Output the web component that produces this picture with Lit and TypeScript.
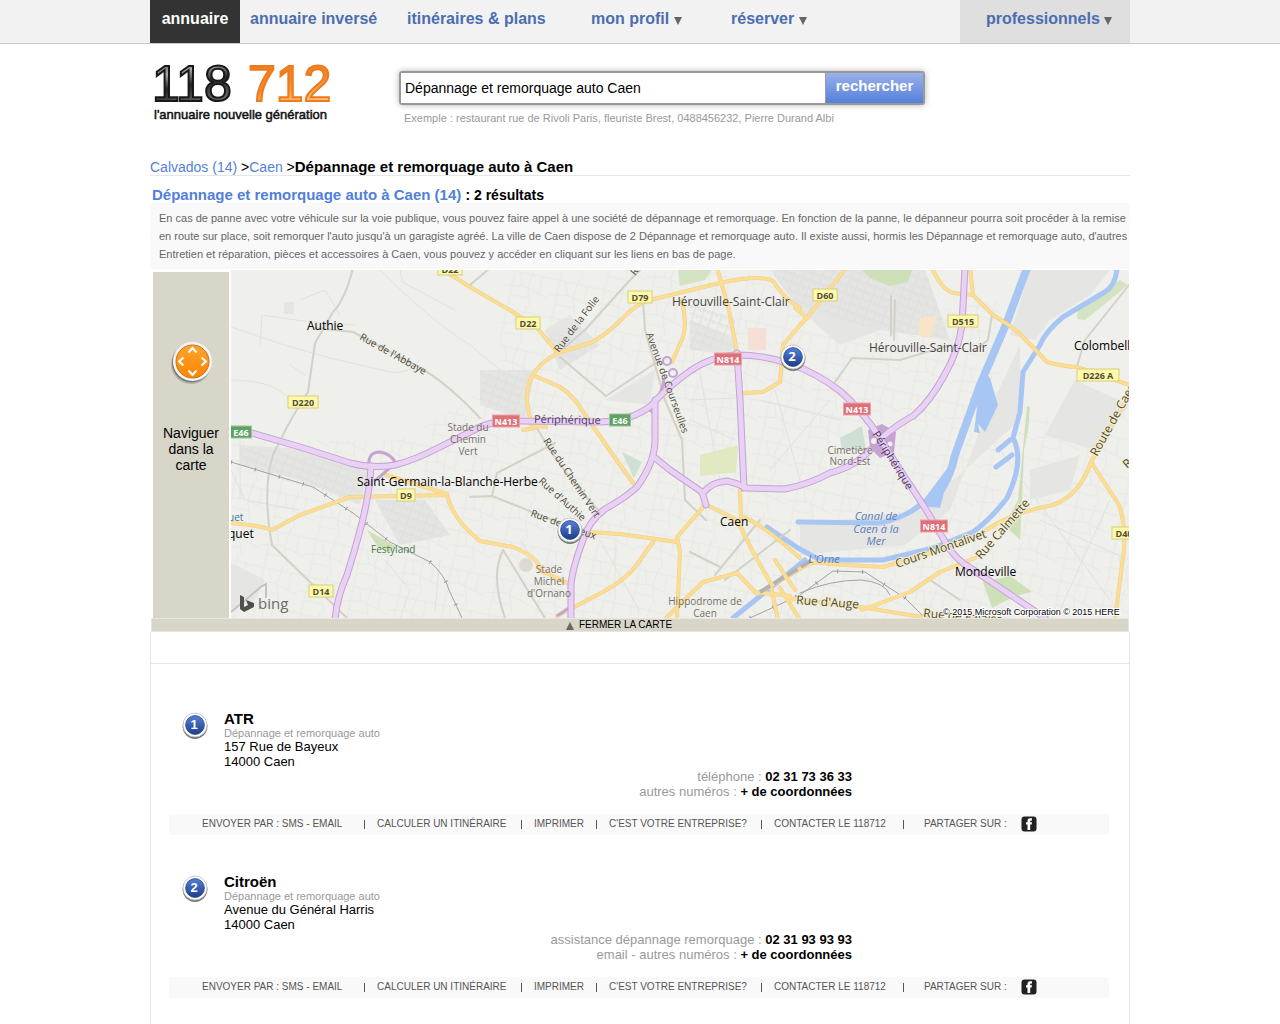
import { LitElement, html, css, svg } from "lit";
import { customElement, property } from "lit/decorators.js";

interface Listing {
  rank: number;
  name: string;
  category: string;
  street: string;
  city: string;
  phoneLabel: string;
  phone: string;
  moreLabel: string;
}

const LISTINGS: Listing[] = [
  {
    rank: 1,
    name: "ATR",
    category: "Dépannage et remorquage auto",
    street: "157 Rue de Bayeux",
    city: "14000 Caen",
    phoneLabel: "téléphone :",
    phone: "02 31 73 36 33",
    moreLabel: "autres numéros :",
  },
  {
    rank: 2,
    name: "Citroën",
    category: "Dépannage et remorquage auto",
    street: "Avenue du Général Harris",
    city: "14000 Caen",
    phoneLabel: "assistance dépannage remorquage :",
    phone: "02 31 93 93 93",
    moreLabel: "email - autres numéros :",
  },
];

/* Blue numbered disc, drawn in a 26 x 28 box. */
const disc = (n: number) => svg`
  <circle cx="13" cy="14.6" r="12.4" fill="#777"></circle>
  <circle cx="13" cy="13" r="12" fill="#fff" stroke="#bbb" stroke-width=".8"></circle>
  <circle cx="13" cy="13" r="9.4" fill="url(#disc)" stroke="#24458f" stroke-width=".8"></circle>
  <text x="12" y="17" text-anchor="middle" font-size="13" font-weight="700" fill="#fff"
    font-family="Liberation Sans, sans-serif">${n}</text>`;

const discGradient = svg`
  <linearGradient id="disc" x1="0" y1="0" x2="0" y2="1">
    <stop offset="0" stop-color="#5580d8"></stop>
    <stop offset="1" stop-color="#1f3d8a"></stop>
  </linearGradient>`;

const MOTORWAYS = [
  "M225 428 L252 433 L300 447 L350 463 Q372 469 395 465 Q415 460 440 447 L480 427 Q495 420 520 421 L600 422 Q632 421 652 405 Q664 390 690 371 Q712 356 737 355 Q765 355 790 364 Q815 372 840 391 Q862 410 880 438 L895 462 L925 508 L947 545 Q956 560 972 569 L1045 618",
  "M655 400 L655 440 Q655 462 637 487 Q625 498 605 509 Q588 522 583 540 Q570 575 571 590 L571 620",
  "M654 457 L670 470 L702 492 L706 505",
  "M704 492 Q712 482 727 481 Q737 483 747 488 L785 489 Q810 484 830 473 Q856 466 870 450",
  "M737 353 L740 400 L744 488",
  "M965 268 L962 325 Q958 352 945 374 Q930 402 913 416 Q895 426 883 437",
  "M371 466 Q370 490 362 523 Q355 550 347 575 Q337 597 335 620",
];

const RAMPS = [
  "M369 465 Q368 452 380 452 Q392 454 396 464 M392 466 L376 480",
  "M645 408 Q656 410 655 424 M652 406 Q664 390 664 378",
  "M557 616 L572 606",
];

const YELLOW_ROADS = [
  "M440 268 L470 287 L513 312 L537 328 L558 353",
  "M800 308 Q785 300 773 281 Q760 274 720 283 L650 300 Q637 303 623 318 Q605 336 590 343 L558 353 Q540 362 533 375 Q526 385 527 402 L531 425 L546 427 M523 430 L535 428",
  "M533 375 L560 387 Q575 397 583 412 L613 455 L633 483",
  "M682 300 Q687 325 683 337 L672 362",
  "M717 268 L729 310 L737 352",
  "M846 268 L807 318 L800 325 L783 345 L780 382 L763 392 L743 393",
  "M795 308 L807 318",
  "M231 523 Q262 526 272 530 L300 515 L350 497 L447 495 Q453 520 480 541 L513 547 Q540 558 540 570 L567 583",
  "M386 475 L447 494",
  "M587 532 L620 534 L677 542",
  "M653 542 L636 566 Q625 580 603 592 L557 616",
  "M705 505 L677 537 L680 552 L677 618",
  "M709 506 L737 520 L753 552 L770 582 L778 620",
  "M666 618 L703 582 L737 573 L755 592 L790 596",
  "M740 490 L741 518 M743 517 Q762 524 800 558",
  "M757 594 L805 566 Q815 560 830 564 L883 567 L933 552 L980 535 Q1005 514 1053 505 Q1080 495 1091 462 L1132 390",
  "M1091 462 L1119 505 Q1126 525 1124 550 L1115 618",
  "M788 598 L867 608 L927 618 M862 610 L910 592 L940 572 L975 558",
  "M932 268 Q942 290 953 293 L973 295 L993 315 Q1010 325 1020 334 L1047 362 Q1060 366 1077 367 L1132 386",
  "M970 268 L973 295",
  "M780 588 L800 620 M775 560 L795 590",
];

const GREY_ROADS = [
  "M353 268 Q345 300 333 312 L315 343 L308 392 Q290 420 283 435 L273 455 Q262 490 272 545 L310 582 L347 618",
  "M315 328 L353 332 L405 360 Q440 375 480 418",
  "M558 353 L585 330 L630 280 L642 268",
  "M643 300 L645 330 L665 400 L682 440 L685 500 L706 520",
  "M560 357 L606 396 L660 360",
  "M537 428 Q560 470 600 512",
  "M470 497 L492 496 L560 523 L585 530",
  "M492 496 L497 473 L555 443",
  "M891 296 L891 335 M895 300 L894 340 M852 358 L900 360 L950 345 M835 382 L852 358",
  "M1129 285 L1085 340 L1077 366",
  "M503 550 Q490 575 505 618 M503 550 L545 618",
  "M715 575 L760 520 M725 580 L790 530 M690 552 L720 567",
  "M930 580 L960 600",
  "M450 268 L490 268 L470 285",
  "M992 315 L988 340 L975 350",
];

const WATER = [
  "M1027 268 L1007 322 L980 385 L955 455 Q950 480 935 498",
  "M1117 268 Q1116 285 1105 292 L1063 317 Q1045 332 1040 345 L1023 372 L1020 412 L1013 438 Q1025 460 1007 498 Q990 520 973 532 L933 548 L883 560 L820 560 L798 548 L767 527",
  "M805 560 L733 618",
  "M798 522 L880 523 Q905 518 925 502",
];

const HAMLET_STREETS = [
  "M231 327 Q280 345 330 358 L390 372 Q410 375 420 360",
  "M400 268 L402 282 L455 310",
  "M231 380 Q275 380 290 400",
  "M260 345 L262 315 L310 322 M310 322 L355 325",
  "M290 365 L305 375 M300 300 L325 290 L340 315",
  "M380 270 Q430 320 470 345 L500 370",
  "M231 470 L245 500 L300 510 M240 440 L240 500",
  "M385 560 L410 590 L400 618 M440 560 L435 610",
  "M520 540 L560 600 M600 540 L640 612 M615 545 L615 600",
  "M690 400 L735 398 M690 420 L735 440 M700 375 L720 480",
  "M760 400 L840 420 M775 390 L800 480 M830 400 L770 470",
  "M1000 450 L1110 600 M1040 520 L1129 560 M1060 610 L1110 500",
];

type Label = [number, number, string];
const TOWNS: Label[] = [
  [307, 330, "Authie"],
  [357, 486, "Saint-Germain-la-Blanche-Herbe"],
  [720, 526, "Caen"],
  [955, 576, "Mondeville"],
  [1074, 350, "Colombelles"],
  [228, 538, "quet"],
];
const DISTRICTS: Label[] = [
  [672, 306, "Hérouville-Saint-Clair"],
  [869, 352, "Hérouville-Saint-Clair"],
];
const PLACES: Label[] = [
  [468, 431, "Stade du"],
  [468, 443, "Chemin"],
  [468, 455, "Vert"],
  [549, 573, "Stade"],
  [549, 585, "Michel"],
  [549, 597, "d'Ornano"],
  [705, 605, "Hippodrome de"],
  [705, 617, "Caen"],
  [850, 454, "Cimetière"],
  [850, 465, "Nord-Est"],
];
const WATER_NAMES: Label[] = [
  [876, 520, "Canal de"],
  [876, 533, "Caen à la"],
  [876, 545, "Mer"],
  [824, 563, "L'Orne"],
];
const YELLOW_SIGNS: Label[] = [
  [450, 269, "D22"],
  [528, 323, "D22"],
  [640, 297, "D79"],
  [825, 295, "D60"],
  [963, 321, "D515"],
  [1098, 375, "D226 A"],
  [303, 402, "D220"],
  [406, 495, "D9"],
  [321, 591, "D14"],
  [1124, 533, "D40"],
];
const RED_SIGNS: Label[] = [
  [728, 359, "N814"],
  [506, 421, "N413"],
  [857, 409, "N413"],
  [934, 526, "N814"],
];
const GREEN_SIGNS: Label[] = [
  [241, 432, "E46"],
  [620, 420, "E46"],
];

const sign = ([x, y, t]: Label, kind: string) => {
  const w = kind === "sy" ? t.length * 6 + 6 : t.length * 6 + 3;
  return svg`
    <rect class=${"plate " + kind} x=${x - w / 2} y=${y - 6} width=${w} height="12"></rect>
    <text class=${"plate-text " + kind + "-text"} x=${x} y=${y + 4}>${t}</text>`;
};

@customElement("town-map")
export class TownMap extends LitElement {
  static styles = css`
    :host { display: block; min-width: 0; }
    .map { display: block; width: 100%; height: auto; background: #efefeb; }
    text { font-family: "Open Sans", "Noto Sans", sans-serif; }
    .line { fill: none; stroke-linejoin: round; stroke-linecap: round; }
    .motor-edge { stroke: #c5a3d2; stroke-width: 7; }
    .motor { stroke: #e8d1f5; stroke-width: 5; }
    .ramp { fill: none; stroke: #c5a3d2; stroke-width: 3; }
    .yellow-edge { stroke: #efcf88; stroke-width: 4; }
    .yellow { stroke: #fcdd94; stroke-width: 3; }
    .grey { stroke: #d3d1c8; stroke-width: 2; }
    .hamlet { stroke: #e2e2df; stroke-width: 1; }
    .water { stroke: #a8c6f3; stroke-width: 5; }
    .canal { stroke-width: 8; }
    .rail { stroke: #a3a3a3; stroke-width: 1; }
    .ties { stroke: #999; stroke-width: 4; stroke-dasharray: 1 24; stroke-linecap: butt; }
    .town { font-size: 12px; fill: #000; }
    .district { font-size: 12px; fill: #444; }
    .place { font-size: 10px; fill: #77706a; text-anchor: middle; }
    .park-name { font-size: 10px; fill: #4c7b4c; }
    .lake-name { fill: #37789e; }
    .water-name { font-size: 11px; fill: #5b7dba; font-style: italic; text-anchor: middle; }
    .street { font-size: 10px; fill: #4d4a36; }
    .street-large { font-size: 12px; }
    .ring { font-size: 11px; fill: #4a3b5c; }
    .halo { paint-order: stroke; stroke: #f3eed0; stroke-width: 2; }
    .plate { stroke-width: 1; }
    .plate-text { font-size: 9px; font-weight: 700; text-anchor: middle; }
    .sy { fill: #fdf9a6; stroke: #d9cd7c; }
    .sy-text { fill: #4f4c3c; }
    .sr { fill: #de7178; stroke: #eba4a8; }
    .sr-text { fill: #fff; }
    .sg { fill: #5ca364; stroke: #9ac69e; }
    .sg-text { fill: #fff; }
    .bing { font-size: 15px; fill: #6b6b6b; }
    .credit { font-family: "Liberation Sans", Arial, sans-serif; font-size: 9px; fill: #000; paint-order: stroke; stroke: #fff; stroke-width: 2; }
  `;

  render() {
    return html`
      <svg class="map" viewBox="231 270 898 348" role="img" aria-label="Carte de Caen">
        <defs>
          ${discGradient}
          <pattern id="streets" width="46" height="38" patternUnits="userSpaceOnUse" patternTransform="rotate(12)">
            <path d="M0 6 H46 M8 0 V38 M0 22 L20 19 L46 26 M27 0 L24 19 L30 38 M8 30 H26 M36 6 V24 M14 6 L18 19"
              fill="none" stroke="#e7e7e4" stroke-width="1"></path>
          </pattern>
          <pattern id="blocks" width="9" height="8" patternUnits="userSpaceOnUse" patternTransform="rotate(20)">
            <path d="M0 2 H9 M3 0 V8 M6 4 H9" fill="none" stroke="#dededd" stroke-width="1"></path>
          </pattern>
        </defs>
        <path d="M500 270 H800 V330 L1000 300 V618 H231 V440 H400 L500 380 Z M1020 420 L1129 400 V618 H1000 Z" fill="url(#streets)"></path>
        <g fill="#e5e5e4">
          <path d="M770 270 H925 L950 340 L880 330 L840 345 L800 310 Z"></path>
          <path d="M1030 270 H1110 L1090 295 L1050 320 L1035 340 L1010 335 Z"></path>
          <path d="M690 320 L735 340 L735 355 L690 350 Z M545 330 L570 315 L600 345 L560 370 Z"></path>
          <path d="M480 370 L535 370 L525 420 L480 405 Z M605 400 L655 370 L650 405 Z"></path>
          <path d="M1020 345 L980 430 L950 510 L905 545 L800 555 V525 L920 510 L1020 420 Z"></path>
          <path d="M240 445 L290 448 L370 467 L360 505 L300 480 L240 465 Z M375 500 L425 500 L450 535 L400 545 Z"></path>
          <path d="M1075 380 L1129 405 L1095 450 L1045 435 Z M1030 470 L1080 455 L1070 490 L1030 500 Z"></path>
          <path d="M231 563 L265 580 L255 600 L231 610 Z M284 302 H294 V314 H284 Z"></path>
        </g>
        <path fill="url(#blocks)" d="M770 270 H925 L950 340 L880 330 L800 310 Z M545 330 L600 345 L560 370 Z M240 445 L370 467 L360 505 L240 465 Z M375 500 L425 500 L450 535 L400 545 Z M480 370 L535 370 L525 420 L480 405 Z M690 300 L735 320 L735 350 L690 350 Z"></path>
        <g fill="#cde0b8">
          <path d="M862 270 H912 L908 282 L890 286 L870 278 Z"></path>
          <path d="M678 270 H712 L705 280 L680 286 Z M1078 305 L1120 280 L1128 285 L1085 320 L1077 319 Z" opacity=".8"></path>
          <path d="M700 455 L738 445 L736 472 L700 476 Z" fill="#e0e9c0"></path>
          <path d="M367 530 L395 546 L390 552 L378 547 Z M983 582 L1010 576 L1032 592 L1015 596 L992 608 Z"></path>
          <path d="M1027 406 L1030 407 L1028 430 L1024 450 L1022 500 L1020 540 L1005 525 L1018 500 Z"></path>
        </g>
        <path d="M840 438 L862 426 L866 450 L842 450 Z M622 452 L642 462 L634 478 Z" fill="#cfdfd3"></path>
        <path d="M748 328 H766 V350 H748 Z" fill="#f6dfd7"></path>
        <path d="M920 318 L937 316 L930 338 L918 336 Z" fill="#f8e5c8"></path>
        <circle cx="526" cy="565" r="7" fill="#dedad3"></circle>

        ${HAMLET_STREETS.map((d) => svg`<path class="line hamlet" d=${d}></path>`)}
        ${WATER.map((d, i) => svg`<path class=${"line water" + (i === 0 ? " canal" : "")} d=${d}></path>`)}
        <path d="M985 372 L990 378 L998 405 L985 432 L978 424 L980 433 L974 432 L977 408 L970 400 Z M952 462 L940 508 L924 506 L898 518 L925 498 L940 478 Z" fill="#a8c6f3"></path>
        <path class="line water" d="M998 450 L1010 440 M996 467 L1012 455"></path>
        ${GREY_ROADS.map((d) => svg`<path class="line grey" d=${d}></path>`)}
        <path class="line rail" d="M231 462 L313 487 L353 513 L390 542 L430 562 Q445 575 449 590 L462 618"></path>
        <path class="line ties" d="M231 462 L313 487 L353 513 L390 542 L430 562 Q445 575 449 590 L462 618"></path>
        <path class="line rail" d="M750 618 L800 595 L833 571 L865 572 L905 598 L925 618 M800 593 Q830 580 861 580 Q885 582 890 595"></path>
        <path class="line ties" d="M750 618 L800 595 L833 571 L865 572 L905 598 L925 618"></path>
        ${YELLOW_ROADS.map((d) => svg`<path class="line yellow-edge" d=${d}></path>`)}
        ${YELLOW_ROADS.map((d) => svg`<path class="line yellow" d=${d}></path>`)}
        <path d="M760 592 L812 560" stroke="#b3b3b3" stroke-width="4" stroke-dasharray="12 4" fill="none"></path>
        <path d="M868 430 L882 424 L896 432 L894 452 L880 458 L870 448 Z" fill="#c5a3d2"></path>
        ${RAMPS.map((d) => svg`<path class="ramp" d=${d}></path>`)}
        <g fill="none" stroke="#c5a3d2" stroke-width="2">
          <circle cx="667" cy="361" r="4"></circle>
          <circle cx="673" cy="373" r="4"></circle>
        </g>
        ${MOTORWAYS.map((d) => svg`<path class="line motor-edge" d=${d}></path>`)}
        ${MOTORWAYS.map((d) => svg`<path class="line motor" d=${d}></path>`)}
        <circle cx="874" cy="441" r="3" fill="#efefeb"></circle>
        <circle cx="890" cy="444" r="2.500" fill="#efefeb"></circle>

        <g class="street">
          <text transform="translate(359 339) rotate(29)">Rue de l'Abbaye</text>
          <text transform="translate(559 353) rotate(-53)">Rue de la Folie</text>
          <text transform="translate(635 276) rotate(-50)">Rue</text>
          <text transform="translate(646 334) rotate(70)">Avenue de Courseulles</text>
          <text transform="translate(543 441) rotate(56)">Rue du Chemin Vert</text>
          <text transform="translate(538 482) rotate(42)">Rue d'Authie</text>
          <text transform="translate(530 516) rotate(20)">Rue de Bayeux</text>
        </g>
        <g class="ring">
          <text transform="translate(872 434) rotate(58)">Périphérique</text>
          <text transform="translate(534 423) rotate(1)">Périphérique</text>
        </g>
        <g class="street street-large halo">
          <text transform="translate(1097 457) rotate(-61)">Route de Caen</text>
          <text transform="translate(897 568) rotate(-19)">Cours Montalivet</text>
          <text transform="translate(981 560) rotate(-49)">Rue Calmette</text>
          <text transform="translate(796 604) rotate(4)">Rue d'Auge</text>
          <text transform="translate(923 617) rotate(5)">Rue de Falaise</text>
          <text transform="translate(1127 469) rotate(-40)">R</text>
        </g>
        ${TOWNS.map(([x, y, t]) => svg`<text class="town" x=${x} y=${y}>${t}</text>`)}
        ${DISTRICTS.map(([x, y, t]) => svg`<text class="district" x=${x} y=${y}>${t}</text>`)}
        ${PLACES.map(([x, y, t]) => svg`<text class="place" x=${x} y=${y}>${t}</text>`)}
        ${WATER_NAMES.map(([x, y, t]) => svg`<text class="water-name" x=${x} y=${y}>${t}</text>`)}
        <text class="park-name" x="371" y="553">Festyland</text>
        <text class="park-name lake-name" x="228" y="521">uet</text>
        ${YELLOW_SIGNS.map((s) => sign(s, "sy"))}
        ${RED_SIGNS.map((s) => sign(s, "sr"))}
        ${GREEN_SIGNS.map((s) => sign(s, "sg"))}

        <path d="M231 612 L262 586 L266 584 L266 598" fill="none" stroke="#c9c1c0" stroke-width="2"></path>
        <path d="M240 595 L244 597 V607 L248 605 L246 600 L254 603 V607 L244 612 L240 609 Z" fill="#4f4f4f"></path>
        <text class="bing" x="258" y="609">bing</text>
        <text class="credit" x="943" y="615">© 2015 Microsoft Corporation © 2015 HERE</text>
        <g transform="translate(780 344)">${disc(2)}</g>
        <g transform="translate(557 517)">${disc(1)}</g>
      </svg>
    `;
  }
}

@customElement("listing-card")
export class ListingCard extends LitElement {
  @property({ attribute: false }) item!: Listing;

  static styles = css`
    :host { display: block; }
    a { color: inherit; text-decoration: none; }
    .card { padding: 0 20px 0 18px; }
    .identity { display: grid; grid-template-columns: 55px 1fr; height: 58px; }
    .badge { margin: 1px 0 0 13px; display: block; }
    .name { margin: 0; font-size: 15px; line-height: 16px; font-weight: 700; }
    .category { margin: 0; font-size: 11px; line-height: 12px; color: #999; }
    .address { font-style: normal; font-size: 13px; line-height: 15px; }
    .contacts { width: 683px; max-width: 100%; text-align: right; font-size: 13px; line-height: 15px; color: #999; }
    .contacts p { margin: 0; }
    .contacts strong, .contacts a { color: #000; font-weight: 700; }
    .actions {
      display: flex; align-items: center; height: 21px; margin: 15px 0 0; padding: 0 0 0 33px;
      background: #f9f9f9; list-style: none; font-size: 10px; line-height: 18px; color: #555; white-space: nowrap;
    }
    .actions li { display: flex; align-items: center; height: 19px; padding-bottom: 2px; }
    .sep { width: 1px; height: 9px; background: #555; margin-top: 1px; }
    .send { width: 163px; }
    .route { width: 157px; }
    .print { width: 75px; }
    .owner { width: 165px; }
    .contact { width: 142px; }
    .action { flex: 1; padding-left: 12px; }
    .send .action { padding-left: 0; }
    .share { padding-left: 20px; gap: 14px; }
    .facebook { display: block; margin-top: 1px; }
  `;

  render() {
    const l = this.item;
    const entries: [string, string][] = [
      ["send", "ENVOYER PAR : SMS - EMAIL"],
      ["route", "CALCULER UN ITINÉRAIRE"],
      ["print", "IMPRIMER"],
      ["owner", "C'EST VOTRE ENTREPRISE?"],
      ["contact", "CONTACTER LE 118712"],
    ];
    return html`
      <article class="card">
        <div class="identity">
          <svg class="badge" width="26" height="28" viewBox="0 0 26 28" aria-hidden="true">
            <defs>${discGradient}</defs>
            ${disc(l.rank)}
          </svg>
          <div>
            <h2 class="name"><a href="#">${l.name}</a></h2>
            <p class="category">${l.category}</p>
            <address class="address">${l.street}<br />${l.city}</address>
          </div>
        </div>
        <div class="contacts">
          <p>${l.phoneLabel} <strong>${l.phone}</strong></p>
          <p>${l.moreLabel} <a href="#">+ de coordonnées</a></p>
        </div>
        <ul class="actions">
          ${entries.map(
            ([kind, text]) => html`
              <li class=${kind}><a class="action" href="#">${text}</a><span class="sep"></span></li>
            `
          )}
          <li class="share">
            <span>PARTAGER SUR :</span>
            <a href="#" aria-label="Facebook">
              <svg class="facebook" width="16" height="16" viewBox="0 0 16 16">
                <rect x=".5" y=".5" width="15" height="15" rx="3" fill="#222"></rect>
                <path d="M6.500 14 V8.500 H5 V6.200 H6.500 V4.800 Q6.500 2.200 9 2.200 H11 V4.600 H10 Q9.200 4.600 9.200 5.400 V6.200 H11 L10.700 8.500 H9.200 V14 Z" fill="#fff"></path>
              </svg>
            </a>
          </li>
        </ul>
      </article>
    `;
  }
}

@customElement("app-root")
export class AppRoot extends LitElement {
  static styles = css`
    :host {
      display: block;
      min-height: 100vh;
      background: #fff;
      color: #000;
      font-family: "Liberation Sans", Arial, sans-serif;
      font-size: 14px;
      line-height: 16px;
    }
    a { color: inherit; text-decoration: none; }
    .wrap { max-width: 980px; margin: 0 auto; }
    .topbar { background: #f2f2f2; border-bottom: 1px solid #c8c8c8; }
    .nav { display: flex; height: 43px; font-size: 16px; font-weight: 700; line-height: 38px; color: #4c6db0; white-space: nowrap; }
    .nav a { box-sizing: border-box; }
    .nav .active { width: 90px; background: #333; color: #fff; text-align: center; }
    .nav .inverse { width: 157px; padding-left: 10px; }
    .nav .plans { width: 184px; padding-left: 10px; }
    .nav .profile { width: 140px; padding-left: 10px; }
    .nav .book { padding-left: 10px; }
    .nav .pro { width: 170px; margin-left: auto; padding-left: 26px; background: #dfdfdf; }
    .caret {
      display: inline-block; vertical-align: -1px;
      border: 4px solid transparent; border-top: 8px solid #666; border-bottom: 0;
    }
    .header { display: flex; align-items: flex-start; height: 110px; }
    .brand { width: 249px; padding-top: 8px; }
    .logo { display: block; }
    .search { padding-top: 27px; width: 526px; }
    .field {
      display: flex; box-sizing: border-box; height: 34px; border: 2px solid #999; border-radius: 3px;
      box-shadow: 0 0 6px rgba(0, 0, 0, 0.3);
    }
    .query { flex: 1; min-width: 0; border: 0; padding: 0 4px; font: inherit; color: #000; background: #fff; outline: 0; }
    .submit {
      width: 98px; border: 0; border-left: 1px solid #999; padding: 0 0 4px; color: #fff;
      font: inherit; font-weight: 700; font-size: 15px;
      background: linear-gradient(#9ab1ea, #5580db);
    }
    .hint { margin: 7px 0 0 5px; font-size: 11px; line-height: 12px; color: #999; white-space: nowrap; }
    .crumbs { height: 21px; border-bottom: 1px solid #e6e6e6; line-height: 26px; }
    .crumbs strong { font-size: 15px; }
    .blue { color: #527fdb; }
    .title { margin: 0; padding: 11px 0 0 2px; font-size: 15px; line-height: 16px; height: 16px; }
    .title small { font-size: 14px; }
    .intro {
      margin: 0; padding: 6px 2px 6px 9px; background: #f9f9f9; color: #666;
      font-size: 11px; line-height: 18px;
    }
    .map-area { display: grid; grid-template-columns: 76px 1fr; column-gap: 2px; padding: 1px 1px 0 3px; }
    .pan { margin-top: 2px; background: #d8d5c9; text-align: center; padding: 68px 8px 0; }
    .compass { display: block; margin: 0 auto 39px 8px; }
    .close {
      display: block; width: calc(100% - 2px); height: 14px; margin: 0 1px; border: 1px solid #e8e6df; padding: 0 42px 0 0;
      background: #d8d5c9; color: #000; font: inherit; font-size: 10px; line-height: 12px;
    }
    .caret-up {
      display: inline-block; margin-right: 5px; vertical-align: -2px;
      border: 4px solid transparent; border-bottom: 8px solid #666; border-top: 0;
    }
    .results { border: 1px solid #e6e6e6; border-top: 0; border-bottom: 0; }
    .rule { height: 31px; border-bottom: 1px solid #e6e6e6; margin-bottom: 47px; }
    .list { display: grid; gap: 39px; padding-bottom: 39px; }
  `;

  render() {
    return html`
      <header>
        <div class="topbar">
          <nav class="wrap nav">
            <a class="active" href="#">annuaire</a>
            <a class="inverse" href="#">annuaire inversé</a>
            <a class="plans" href="#">itinéraires &amp; plans</a>
            <a class="profile" href="#">mon profil <span class="caret"></span></a>
            <a class="book" href="#">réserver <span class="caret"></span></a>
            <a class="pro" href="#">professionnels <span class="caret"></span></a>
          </nav>
        </div>
        <div class="wrap header">
          <a class="brand" href="#" aria-label="118 712">
            <svg class="logo" width="190" height="76" viewBox="0 0 190 76" font-family="Liberation Sans, Arial, sans-serif">
              <defs>
                <linearGradient id="ink" x1="0" y1="0" x2=".3" y2="1">
                  <stop offset="0" stop-color="#222"></stop>
                  <stop offset=".35" stop-color="#aaa"></stop>
                  <stop offset=".6" stop-color="#222"></stop>
                  <stop offset="1" stop-color="#777"></stop>
                </linearGradient>
                <linearGradient id="amber" x1="0" y1="0" x2=".3" y2="1">
                  <stop offset="0" stop-color="#ee7a1c"></stop>
                  <stop offset=".6" stop-color="#f08a30"></stop>
                  <stop offset="1" stop-color="#ffce8a"></stop>
                </linearGradient>
              </defs>
              <g font-size="50" stroke-width="2">
                <text x="2" y="49" fill="url(#ink)" stroke="#181818">118</text>
                <text x="98" y="49" fill="url(#amber)" stroke="#ee7a1c">712</text>
              </g>
              <text x="4" y="67" font-size="13" fill="#111" stroke="#111" stroke-width=".5">l'annuaire nouvelle génération</text>
            </svg>
          </a>
          <form class="search" @submit=${(e: Event) => e.preventDefault()}>
            <div class="field">
              <input class="query" type="text" aria-label="Recherche" aria-describedby="hint" value="Dépannage et remorquage auto Caen" />
              <button class="submit" type="submit">rechercher</button>
            </div>
            <p class="hint" id="hint">Exemple : restaurant rue de Rivoli Paris, fleuriste Brest, 0488456232, Pierre Durand Albi</p>
          </form>
        </div>
      </header>
      <main class="wrap">
        <nav class="crumbs">
          <a class="blue" href="#">Calvados (14)</a> &gt;<a class="blue" href="#">Caen</a> &gt;<strong>Dépannage et remorquage auto à Caen</strong>
        </nav>
        <h1 class="title"><a class="blue" href="#">Dépannage et remorquage auto à Caen (14)</a> <small>: 2 résultats</small></h1>
        <p class="intro">
          En cas de panne avec votre véhicule sur la voie publique, vous pouvez faire appel à une société de dépannage et
          remorquage. En fonction de la panne, le dépanneur pourra soit procéder à la remise en route sur place, soit
          remorquer l'auto jusqu'à un garagiste agréé. La ville de Caen dispose de 2 Dépannage et remorquage auto. Il existe
          aussi, hormis les Dépannage et remorquage auto, d'autres Entretien et réparation, pièces et accessoires à Caen, vous
          pouvez y accéder en cliquant sur les liens en bas de page.
        </p>
        <section class="map-area">
          <div class="pan">
            <svg class="compass" width="46" height="46" viewBox="0 0 46 46" aria-hidden="true">
              <defs>
                <linearGradient id="orange" x1="0" y1="0" x2="0" y2="1">
                  <stop offset="0" stop-color="#ffa531"></stop>
                  <stop offset="1" stop-color="#ff8400"></stop>
                </linearGradient>
              </defs>
              <circle cx="22" cy="24" r="20" fill="#777" opacity=".35"></circle>
              <circle cx="22.500" cy="23" r="19.500" fill="#555" opacity=".6"></circle>
              <circle cx="23.500" cy="21.500" r="19.500" fill="#f4f4f4"></circle>
              <circle cx="23.500" cy="21.500" r="16.500" fill="url(#orange)" stroke="#c96f13" stroke-width="1"></circle>
              <g fill="none" stroke="#fff" stroke-width="2">
                <path d="M19.500 12.500 L23.500 8 L27.500 12.500"></path>
                <path d="M19.500 30.500 L23.500 35 L27.500 30.500"></path>
                <path d="M14.500 17.500 L10 21.500 L14.500 25.500"></path>
                <path d="M32.500 17.500 L37 21.500 L32.500 25.500"></path>
              </g>
            </svg>
            Naviguer dans la carte
          </div>
          <town-map></town-map>
        </section>
        <button class="close" type="button"><span class="caret-up"></span>FERMER LA CARTE</button>
        <section class="results">
          <div class="rule"></div>
          <div class="list">${LISTINGS.map((l) => html`<listing-card .item=${l}></listing-card>`)}</div>
        </section>
      </main>
    `;
  }
}
